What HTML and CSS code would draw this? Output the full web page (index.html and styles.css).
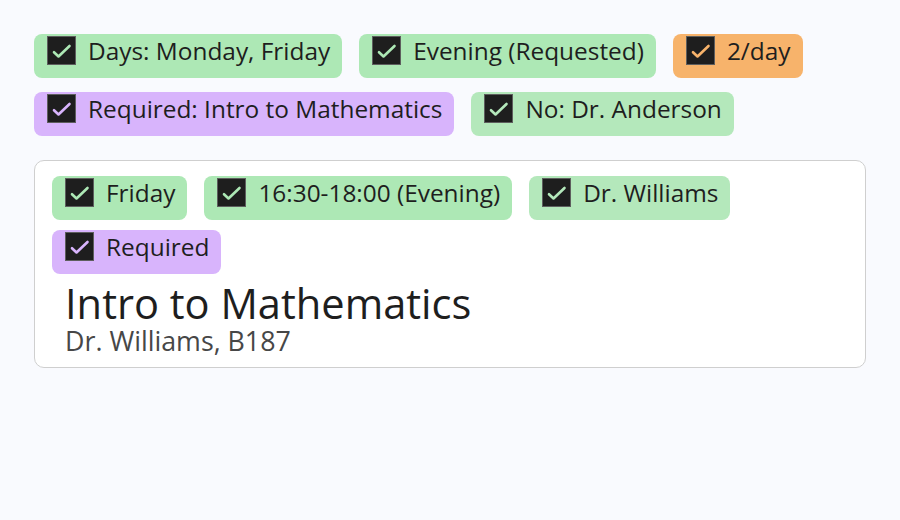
FILE: index.html
```html
<!DOCTYPE html>
<html>
<head>
<meta charset="utf-8">
<link rel="stylesheet" href="styles.css">
</head>
<body>
<div class="page">
  <div class="chips top">
    <span class="chip green"><span class="box"><svg viewBox="0 0 29 29"><path d="M7 16.2l4.5 4.3 11-10.5"/></svg></span>Days: Monday, Friday</span>
    <span class="chip green"><span class="box"><svg viewBox="0 0 29 29"><path d="M7 16.2l4.5 4.3 11-10.5"/></svg></span>Evening (Requested)</span>
    <span class="chip orange"><span class="box"><svg viewBox="0 0 29 29"><path d="M7 16.2l4.5 4.3 11-10.5"/></svg></span>2/day</span>
    <span class="chip purple"><span class="box"><svg viewBox="0 0 29 29"><path d="M7 16.2l4.5 4.3 11-10.5"/></svg></span>Required: Intro to Mathematics</span>
    <span class="chip green2"><span class="box"><svg viewBox="0 0 29 29"><path d="M7 16.2l4.5 4.3 11-10.5"/></svg></span>No: Dr. Anderson</span>
  </div>
  <div class="card">
    <div class="chips inner">
      <span class="chip green"><span class="box"><svg viewBox="0 0 29 29"><path d="M7 16.2l4.5 4.3 11-10.5"/></svg></span>Friday</span>
      <span class="chip green"><span class="box"><svg viewBox="0 0 29 29"><path d="M7 16.2l4.5 4.3 11-10.5"/></svg></span>16:30-18:00 (Evening)</span>
      <span class="chip green2"><span class="box"><svg viewBox="0 0 29 29"><path d="M7 16.2l4.5 4.3 11-10.5"/></svg></span>Dr. Williams</span>
      <span class="chip purple"><span class="box"><svg viewBox="0 0 29 29"><path d="M7 16.2l4.5 4.3 11-10.5"/></svg></span>Required</span>
    </div>
    <div class="info">
      <div class="title">Intro to Mathematics</div>
      <div class="sub">Dr. Williams, B187</div>
    </div>
  </div>
</div>
</body>
</html>
```
FILE: styles.css
```css
html, body {
  margin: 0;
  background: #f9fafe;
}
body {
  font-family: "Open Sans", "Noto Sans", sans-serif;
  color: #1e1e1e;
}
.page {
  padding: 34px 34px 0 34px;
  width: 832px;
}
.chips {
  display: flex;
  flex-wrap: wrap;
  column-gap: 17px;
  row-gap: 14px;
}
.chips.inner {
  row-gap: 10px;
}
.chip {
  display: inline-flex;
  align-items: flex-start;
  height: 44px;
  box-sizing: border-box;
  padding: 0 12px 0 13px;
  border-radius: 8px;
  font-size: 24.4px;
  line-height: 33px;
  gap: 12px;
  white-space: nowrap;
}
.green { background: #ade8b5; --c: #ade8b5; }
.green2 { background: #b4e8bb; --c: #b4e8bb; }
.orange { background: #f7b36b; --c: #f7b36b; }
.purple { background: #d8b4fc; --c: #d8b4fc; }
.box {
  flex: none;
  width: 29px;
  height: 29px;
  margin-top: 1.5px;
  box-sizing: border-box;
  background: #1e1e1e;
  border: 1px solid #5e5e5e;
  position: relative;
}
.box svg {
  position: absolute;
  left: -1px;
  top: -1px;
  width: 29px;
  height: 29px;
}
.box path {
  fill: none;
  stroke: var(--c);
  stroke-width: 2.6;
  stroke-linecap: round;
  stroke-linejoin: round;
}
.card {
  margin-top: 24px;
  background: #fff;
  border: 1px solid #cfcfcf;
  border-radius: 10px;
  padding: 15px 17px 12px 17px;
}
.info {
  padding: 5px 0 0 13px;
}
.title {
  font-size: 41.6px;
  line-height: 48px;
  color: #1e1e1e;
}
.sub {
  font-size: 26.8px;
  line-height: 28px;
  color: #474747;
}
```
